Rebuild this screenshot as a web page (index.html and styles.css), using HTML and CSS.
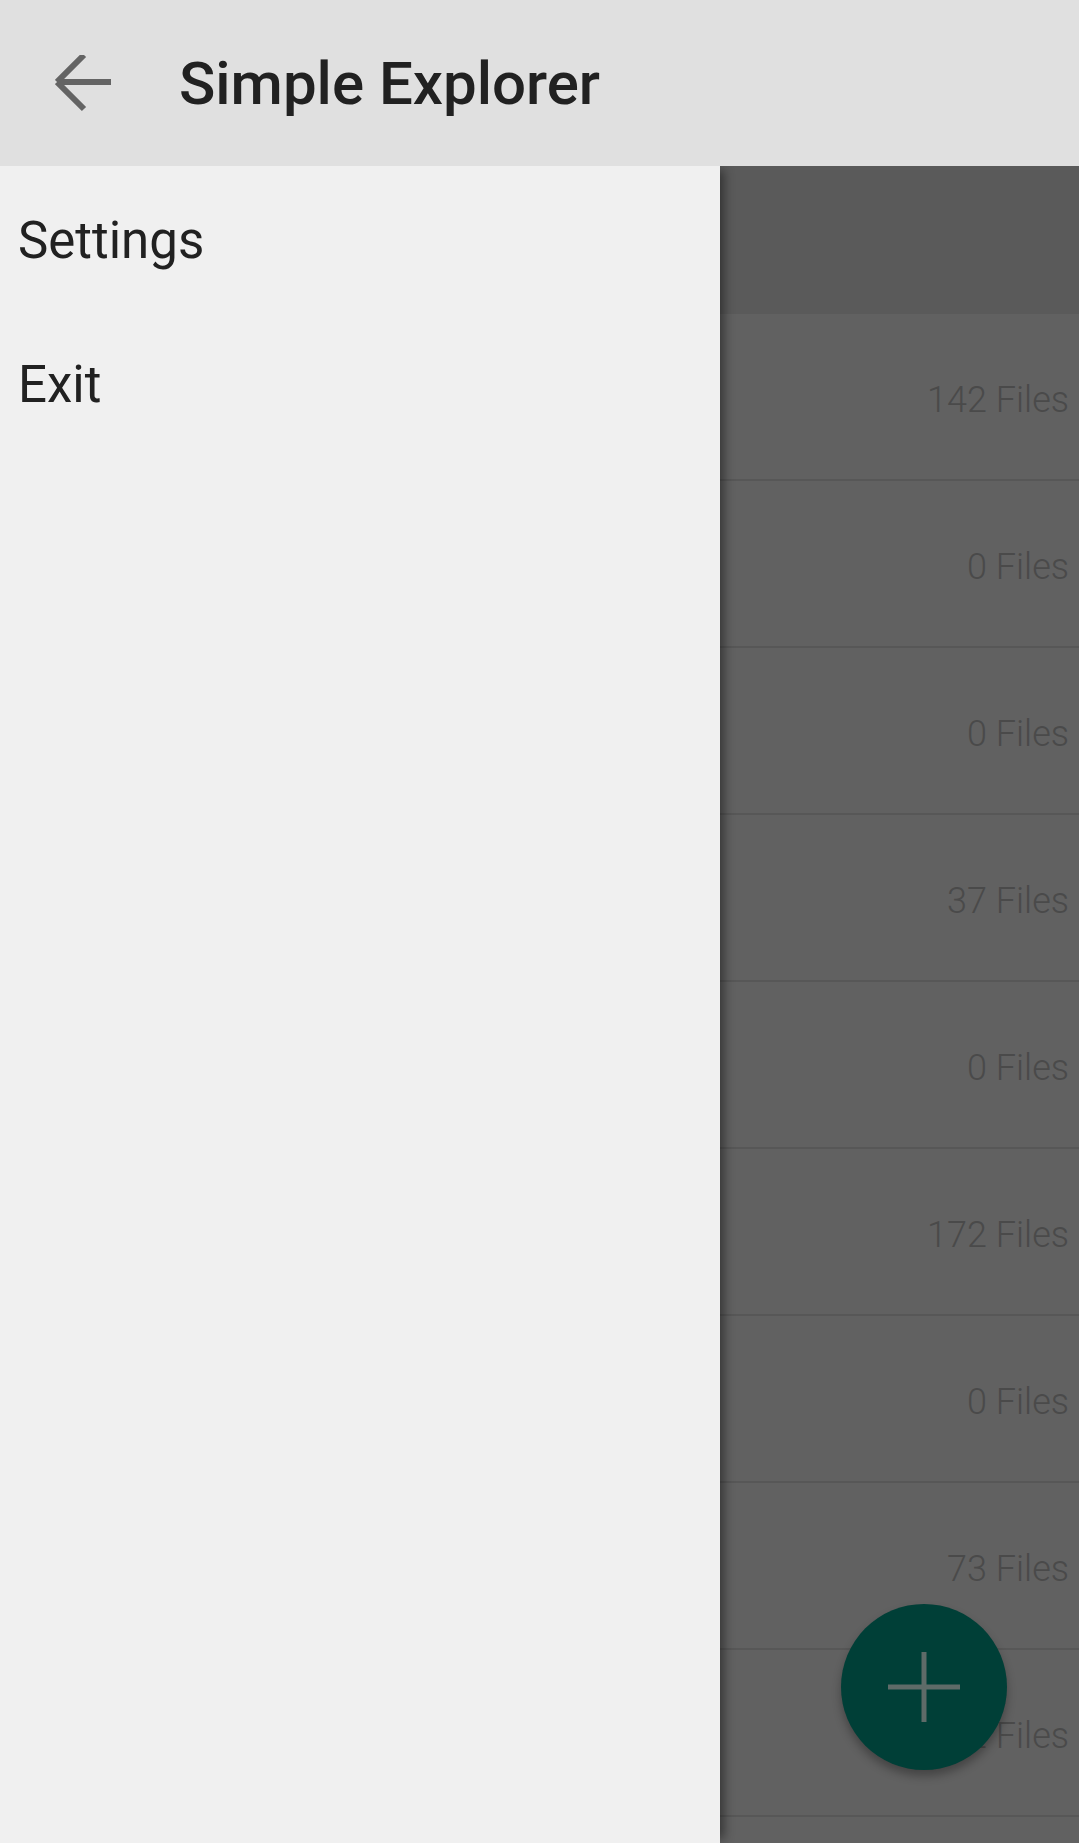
FILE: index.html
```html
<!DOCTYPE html>
<html lang="en">
<head>
    <meta charset="UTF-8">
    <meta name="viewport" content="width=device-width, initial-scale=1.0">
    <title>Simple Explorer</title>
    <link rel="stylesheet" href="styles.css">
</head>
<body>
    <div class="toolbar">
        <svg class="back" width="60" height="60" viewBox="0 0 60 60">
            <path d="M2 27H56 M2 27L29 0 M2 27L29 54" stroke="#646464" stroke-width="6" fill="none"/>
        </svg>
        <h1 class="title">Simple Explorer</h1>
    </div>

    <div class="main">
        <div class="drawer">
            <div class="drawer-item">Settings</div>
            <div class="drawer-item">Exit</div>
        </div>

        <div class="content">
            <div class="band"></div>
            <div class="row">142 Files</div>
            <div class="row">0 Files</div>
            <div class="row">0 Files</div>
            <div class="row">37 Files</div>
            <div class="row">0 Files</div>
            <div class="row">172 Files</div>
            <div class="row">0 Files</div>
            <div class="row">73 Files</div>
            <div class="row">12 Files</div>
            <div class="row"></div>

            <div class="fab">
                <svg width="72" height="72" viewBox="0 0 72 72">
                    <path d="M0 36H72 M36 1V71" stroke="#5e6b68" stroke-width="5" fill="none"/>
                </svg>
            </div>
        </div>
    </div>
</body>
</html>
```

FILE: styles.css
```css
body {
    margin: 0;
    width: 1079px;
    height: 1843px;
    overflow: hidden;
    font-family: Roboto, "Noto Sans", sans-serif;
    background-color: #f0f0f0;
}
.toolbar {
    height: 166px;
    background-color: #e0e0e0;
    display: flex;
    align-items: center;
    position: relative;
    z-index: 2;
}
.back {
    margin-left: 55px;
    margin-top: 4px;
}
.title {
    margin: 0 0 0 64px;
    font-size: 60px;
    font-weight: 500;
    color: #212121;
}
.main {
    display: flex;
    height: 1677px;
}
.drawer {
    width: 720px;
    flex: none;
    background-color: #f0f0f0;
    padding-top: 2px;
    position: relative;
    z-index: 1;
    box-shadow: 8px 0 10px -4px rgba(0,0,0,0.45);
}
.drawer-item {
    height: 144px;
    display: flex;
    align-items: center;
    padding-left: 18px;
    font-size: 51px;
    color: #212121;
}
.content {
    flex: 1;
    position: relative;
    background-color: #616161;
    overflow: hidden;
}
.band {
    height: 148px;
    background-color: #5a5a5a;
}
.row {
    height: 167px;
    border-bottom: 2px solid #575757;
    box-sizing: border-box;
    display: flex;
    align-items: center;
    justify-content: flex-end;
    padding-right: 10px;
    padding-top: 7px;
    font-size: 36px;
    font-weight: 300;
    color: #4a4a4a;
}
.fab {
    position: absolute;
    right: 72px;
    bottom: 73px;
    width: 166px;
    height: 166px;
    border-radius: 50%;
    background-color: #003f37;
    box-shadow: 0 6px 10px rgba(0,0,0,0.3);
    display: flex;
    align-items: center;
    justify-content: center;
}
```
